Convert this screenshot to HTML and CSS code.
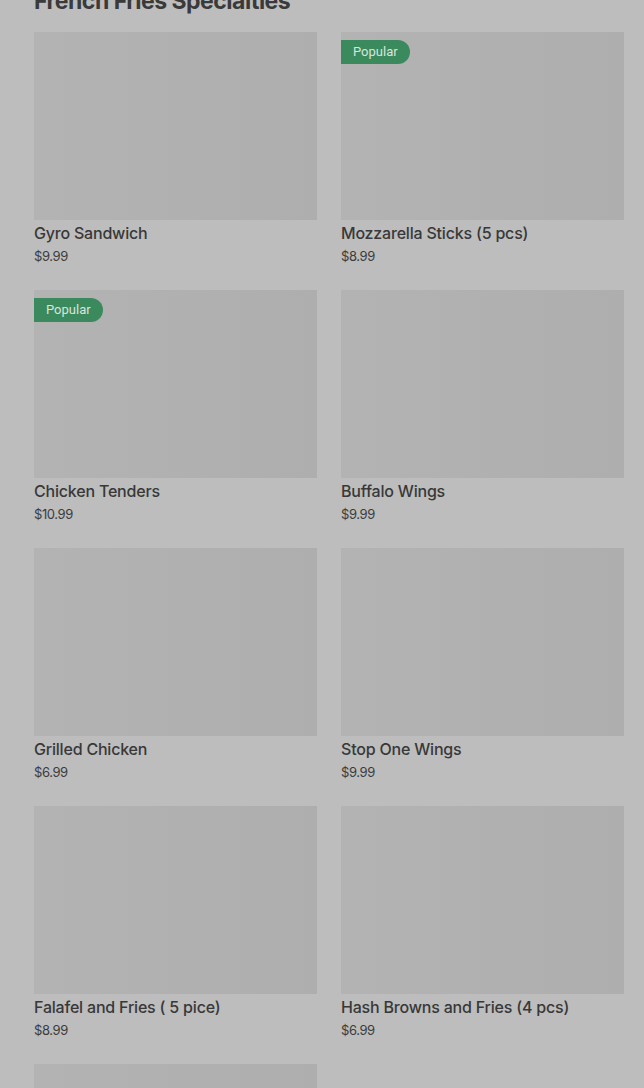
FILE: index.html
```html
<!DOCTYPE html>
<html lang="en">
  <head>
    <meta charset="UTF-8" />
    <meta name="viewport" content="width=device-width, initial-scale=1.0" />
    <title>French Fries Specialties</title>
    <link rel="stylesheet" href="styles.css">
  </head>
  <body>
    <section class="menu-section">
      <h2 class="section-title">French Fries Specialties</h2>
      <div class="item-grid">
        <div class="item">
          <div class="item-image"></div>
          <div class="item-name">Gyro Sandwich</div>
          <div class="item-price">$9.99</div>
        </div>
        <div class="item">
          <div class="item-image"><span class="badge">Popular</span></div>
          <div class="item-name">Mozzarella Sticks (5 pcs)</div>
          <div class="item-price">$8.99</div>
        </div>
        <div class="item">
          <div class="item-image"><span class="badge">Popular</span></div>
          <div class="item-name">Chicken Tenders</div>
          <div class="item-price">$10.99</div>
        </div>
        <div class="item">
          <div class="item-image"></div>
          <div class="item-name">Buffalo Wings</div>
          <div class="item-price">$9.99</div>
        </div>
        <div class="item">
          <div class="item-image"></div>
          <div class="item-name">Grilled Chicken</div>
          <div class="item-price">$6.99</div>
        </div>
        <div class="item">
          <div class="item-image"></div>
          <div class="item-name">Stop One Wings</div>
          <div class="item-price">$9.99</div>
        </div>
        <div class="item">
          <div class="item-image"></div>
          <div class="item-name">Falafel and Fries ( 5 pice)</div>
          <div class="item-price">$8.99</div>
        </div>
        <div class="item">
          <div class="item-image"></div>
          <div class="item-name">Hash Browns and Fries (4 pcs)</div>
          <div class="item-price">$6.99</div>
        </div>
        <div class="item">
          <div class="item-image"></div>
        </div>
      </div>
    </section>
  </body>
</html>
```

FILE: styles.css
```css
body {
  margin: 0;
  background-color: #bdbdbd;
  font-family: Inter, "Noto Sans", sans-serif;
  color: #383838;
}

.menu-section {
  padding: 0 20px 40px 34px;
  margin-top: -13px;
}

.section-title {
  margin: 0 0 16px;
  font-size: 23px;
  line-height: 29px;
  font-weight: 700;
  letter-spacing: -0.5px;
  color: #3a3a3a;
}

.item-grid {
  display: grid;
  grid-template-columns: repeat(2, 1fr);
  column-gap: 24px;
  row-gap: 25px;
}

.item-image {
  height: 188px;
  background: linear-gradient(90deg, #b3b3b3, #aeaeae);
  padding-top: 8px;
  box-sizing: border-box;
}

.badge {
  display: inline-block;
  height: 24px;
  line-height: 24px;
  padding: 0 12px;
  background-color: #3b8a5e;
  color: #d6e6dc;
  font-family: Roboto, sans-serif;
  font-size: 13px;
  border-radius: 0 12px 12px 0;
}

.item-name {
  margin-top: 3px;
  font-size: 16px;
  line-height: 20px;
  font-weight: 500;
  letter-spacing: -0.2px;
  color: #383838;
}

.item-price {
  margin-top: 5px;
  font-size: 13px;
  line-height: 17px;
  color: #3c3c3c;
  letter-spacing: -0.4px;
}
```
